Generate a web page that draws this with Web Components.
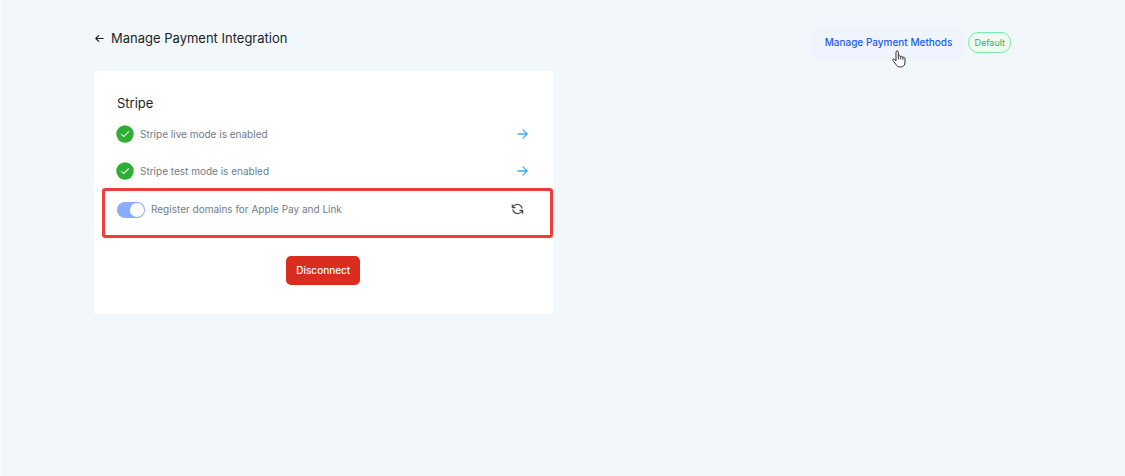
<!DOCTYPE html>
<html lang="en">
<head>
<meta charset="utf-8">
<title>Manage Payment Integration</title>
<style>
    body {
        margin: 0;
        min-height: 100vh;
        box-sizing: border-box;
        border-left: 1px solid #fafcfd;
        background: #f1f7fa;
        color: #1b1f24;
        font-family: Inter, "Liberation Sans", sans-serif;
        font-size: 10px;
    }
</style>
</head>
<body>
<payment-page>
    <page-header slot="header" heading="Manage Payment Integration">
        <link-button>Manage Payment Methods</link-button>
        <status-badge>Default</status-badge>
    </page-header>
    <provider-card heading="Stripe">
        <mode-row label="Stripe live mode is enabled"></mode-row>
        <mode-row label="Stripe test mode is enabled"></mode-row>
        <domain-row label="Register domains for Apple Pay and Link"></domain-row>
        <danger-button slot="action">Disconnect</danger-button>
    </provider-card>
</payment-page>

<script>
class PaymentPage extends HTMLElement {

    constructor() {
        super();
        this.attachShadow({mode: "open"}).innerHTML = `
            <style>
                :host {
                    display: block;
                    padding: 28px 114px 24px 93px;
                }

                main {
                    display: grid;
                    grid-template-columns: 1fr 1fr;
                    margin-top: 14px;
                }
            </style>
            <slot name="header"></slot>
            <main><slot></slot></main>`;
    }
}

class PageHeader extends HTMLElement {

    connectedCallback() {
        this.attachShadow({mode: "open"}).innerHTML = `
            <style>
                :host {
                    display: flex;
                    align-items: flex-start;
                    justify-content: space-between;
                }

                .title, .actions {
                    display: flex;
                    align-items: center;
                }

                .title {
                    gap: 6px;
                }

                .actions {
                    gap: 4px;
                }

                h1 {
                    margin: 0;
                    font-size: 13px;
                    line-height: 20px;
                    font-weight: 400;
                }

                a {
                    display: flex;
                    color: inherit;
                }
            </style>
            <div class="title">
                <a href="#" aria-label="Back">
                    <svg width="11" height="11" viewBox="0 0 11 11" fill="none" stroke="currentColor" stroke-width="1.1" stroke-linecap="round" stroke-linejoin="round">
                        <path d="M9.2 5.5H2M4.7 2.6L1.8 5.5L4.7 8.4"/>
                    </svg>
                </a>
                <h1>${this.getAttribute("heading")}</h1>
            </div>
            <div class="actions"><slot></slot></div>`;
    }
}

class LinkButton extends HTMLElement {

    constructor() {
        super();
        this.attachShadow({mode: "open"}).innerHTML = `
            <style>
                :host {
                    display: block;
                    position: relative;
                }

                button {
                    display: block;
                    padding: 0 12px;
                    border: 0;
                    border-radius: 5px;
                    background: #f0f4fe;
                    box-shadow: 0 1px 1px #e9eff7;
                    color: #1d5cf0;
                    font: 500 10px/29px Inter, "Liberation Sans", sans-serif;
                    cursor: pointer;
                }

                /* hand pointer over the lower edge of the button */
                svg {
                    position: absolute;
                    left: 79px;
                    top: 22px;
                }
            </style>
            <button type="button"><slot></slot></button>
            <svg width="14" height="18" viewBox="0 0 14 18" fill="#fff" stroke="#333" stroke-width="1" stroke-linejoin="round" aria-hidden="true">
                <path d="M4 11V2.2C4 .4 6.4.4 6.4 2.2V6.4C6.7 5.4 8.6 5.6 8.7 6.8C9.2 6 10.8 6.3 10.9 7.5C11.6 6.9 13 7.4 13 8.7V12C13 15 11.5 17 8.6 17C5.9 17 4.9 16 3.8 14.2L1 10.6C.3 9.4 1.8 8.5 2.8 9.5Z"/>
                <path d="M6.4 6.4V9.5M8.7 6.8V9.5M10.9 7.5V9.8" fill="none"/>
            </svg>`;
    }
}

class StatusBadge extends HTMLElement {

    constructor() {
        super();
        this.attachShadow({mode: "open"}).innerHTML = `
            <style>
                :host {
                    display: block;
                    padding: 0 5px;
                    border: 1px solid #7ce8a8;
                    border-radius: 10px;
                    background: #eefdf3;
                    color: #35ae62;
                    font-size: 9px;
                    line-height: 19px;
                }
            </style>
            <slot></slot>`;
    }
}

class ProviderCard extends HTMLElement {

    connectedCallback() {
        this.attachShadow({mode: "open"}).innerHTML = `
            <style>
                :host {
                    display: block;
                    padding: 22px 0 29px;
                    background: #fff;
                }

                h2 {
                    margin: 0 23px 4px;
                    font-size: 13px;
                    line-height: 20px;
                    font-weight: 400;
                }

                .rows {
                    display: flex;
                    flex-direction: column;
                }

                .action {
                    display: flex;
                    justify-content: center;
                    margin-top: 18px;
                }
            </style>
            <h2>${this.getAttribute("heading")}</h2>
            <div class="rows"><slot></slot></div>
            <div class="action"><slot name="action"></slot></div>`;
    }
}

class ModeRow extends HTMLElement {

    connectedCallback() {
        const label = this.getAttribute("label");
        this.attachShadow({mode: "open"}).innerHTML = `
            <style>
                :host {
                    display: flex;
                    align-items: center;
                    gap: 6px;
                    height: 34px;
                    margin-bottom: 3px;
                    padding: 0 24px 0 22px;
                    color: #6f7c88;
                }

                :host(:nth-of-type(2)) {
                    margin-bottom: 0;
                }

                span {
                    flex: 1;
                }

                a {
                    display: flex;
                    color: #45aae3;
                }
            </style>
            <svg width="18" height="18" viewBox="0 0 18 18" fill="none" aria-hidden="true">
                <circle cx="9" cy="9" r="8.7" fill="#2fae34"/>
                <path d="M5.2 9.2L7.8 11.6L12.8 6.4" stroke="#fff" stroke-width="1.1"/>
            </svg>
            <span>${label}</span>
            <a href="#" aria-label="${label}">
                <svg width="13" height="12" viewBox="0 0 13 12" fill="none" stroke="currentColor" stroke-width="1.3" stroke-linecap="round" stroke-linejoin="round">
                    <path d="M2 6H11M7 1.9L11.1 6L7 10.1"/>
                </svg>
            </a>`;
    }
}

class DomainRow extends HTMLElement {

    connectedCallback() {
        this.attachShadow({mode: "open"}).innerHTML = `
            <style>
                :host {
                    display: flex;
                    align-items: flex-start;
                    justify-content: space-between;
                    margin-left: 8px;
                    padding: 9px 26px 17px 12px;
                    border: 3px solid #ed3d3d;
                    border-radius: 3px;
                    color: #6f7c88;
                }

                .field {
                    display: flex;
                    align-items: flex-end;
                    gap: 6px;
                    height: 18px;
                }

                label {
                    line-height: 18px;
                }

                input {
                    appearance: none;
                    display: flex;
                    justify-content: flex-end;
                    box-sizing: border-box;
                    width: 28px;
                    height: 16px;
                    margin: 0;
                    padding: 1px;
                    border-radius: 8px;
                    background: #8aacf9;
                }

                input::before {
                    content: "";
                    width: 14px;
                    height: 14px;
                    border-radius: 50%;
                    background: #fff;
                }

                input:not(:checked) {
                    justify-content: flex-start;
                    background: #c5ccd6;
                }

                button {
                    display: flex;
                    align-items: center;
                    height: 18px;
                    padding: 0;
                    border: 0;
                    background: none;
                    color: #414b5a;
                }
            </style>
            <div class="field">
                <input type="checkbox" id="domains" checked>
                <label for="domains">${this.getAttribute("label")}</label>
            </div>
            <button type="button" aria-label="Refresh">
                <svg width="13" height="12" viewBox="0 0 13 12" fill="none" stroke="currentColor" stroke-width="1.2" stroke-linecap="round" stroke-linejoin="round">
                    <path d="M1.3 1.8V4.6H4.1M1.6 4.4C3.4.7 8.4.2 10.4 3.6C10.7 4.1 10.9 4.7 11 5.2"/>
                    <path d="M11.7 10.2V7.4H8.9M11.4 7.6C9.6 11.3 4.6 11.8 2.6 8.4C2.3 7.9 2.1 7.3 2 6.8"/>
                </svg>
            </button>`;
    }
}

class DangerButton extends HTMLElement {

    constructor() {
        super();
        this.attachShadow({mode: "open"}).innerHTML = `
            <style>
                :host {
                    display: block;
                }

                button {
                    display: block;
                    padding: 0 10px;
                    border: 0;
                    border-radius: 5px;
                    background: #d92d20;
                    color: #fff;
                    font: 500 10px/29px Inter, "Liberation Sans", sans-serif;
                }
            </style>
            <button type="button"><slot></slot></button>`;
    }
}

customElements.define("payment-page", PaymentPage);
customElements.define("page-header", PageHeader);
customElements.define("link-button", LinkButton);
customElements.define("status-badge", StatusBadge);
customElements.define("provider-card", ProviderCard);
customElements.define("mode-row", ModeRow);
customElements.define("domain-row", DomainRow);
customElements.define("danger-button", DangerButton);
</script>
</body>
</html>
